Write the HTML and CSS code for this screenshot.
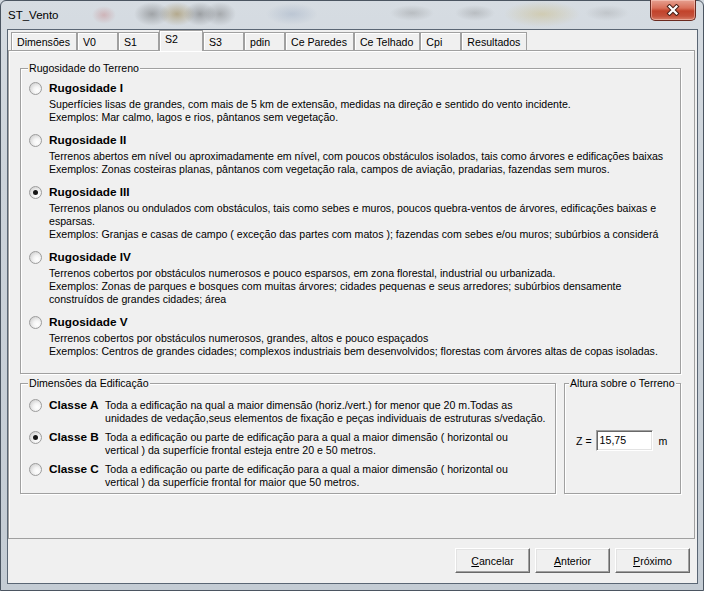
FILE: index.html
```
<!DOCTYPE html>
<html lang="pt">
<head>
<meta charset="utf-8">
<title>ST_Vento</title>
<link rel="stylesheet" href="styles.css">
</head>
<body>
<div class="window">
  <div class="titlebar">
    <span class="title">ST_Vento</span>
    <button class="close" aria-label="Fechar">
      <svg width="14" height="12" viewBox="0 0 14 12">
        <path d="M3.5 2.5 L10.5 9.5 M10.5 2.5 L3.5 9.5" stroke="#4a2018" stroke-width="4.2" stroke-linecap="square" fill="none"/>
        <path d="M3.5 2.5 L10.5 9.5 M10.5 2.5 L3.5 9.5" stroke="#ffffff" stroke-width="2.2" stroke-linecap="square" fill="none"/>
      </svg>
    </button>
  </div>
  <div class="client">
    <div class="tabs">
      <div class="tab">Dimensões</div>
      <div class="tab">V0</div>
      <div class="tab">S1</div>
      <div class="tab sel">S2</div>
      <div class="tab">S3</div>
      <div class="tab">pdin</div>
      <div class="tab">Ce Paredes</div>
      <div class="tab">Ce Telhado</div>
      <div class="tab">Cpi</div>
      <div class="tab">Resultados</div>
    </div>
    <div class="panel">
      <div class="group rug">
        <div class="legend">Rugosidade do Terreno</div>
        <div class="opts">
          <div class="opt">
            <div class="opt-head"><span class="radio"></span><b>Rugosidade I</b></div>
            <div class="opt-desc">Superfícies lisas de grandes, com mais de 5 km de extensão, medidas na direção e sentido do vento incidente.<br>Exemplos: Mar calmo, lagos e rios, pântanos sem vegetação.</div>
          </div>
          <div class="opt">
            <div class="opt-head"><span class="radio"></span><b>Rugosidade II</b></div>
            <div class="opt-desc">Terrenos abertos em nível ou aproximadamente em nível, com poucos obstáculos isolados, tais como árvores e edificações baixas<br>Exemplos: Zonas costeiras planas, pântanos com vegetação rala, campos de aviação, pradarias, fazendas sem muros.</div>
          </div>
          <div class="opt">
            <div class="opt-head"><span class="radio on"></span><b>Rugosidade III</b></div>
            <div class="opt-desc">Terrenos planos ou ondulados com obstáculos, tais como sebes e muros, poucos quebra-ventos de árvores, edificações baixas e<br>esparsas.<br>Exemplos: Granjas e casas de campo ( exceção das partes com matos ); fazendas com sebes e/ou muros; subúrbios a considerá</div>
          </div>
          <div class="opt">
            <div class="opt-head"><span class="radio"></span><b>Rugosidade IV</b></div>
            <div class="opt-desc">Terrenos cobertos por obstáculos numerosos e pouco esparsos, em zona florestal, industrial ou urbanizada.<br>Exemplos: Zonas de parques e bosques com muitas árvores; cidades pequenas e seus arredores; subúrbios densamente<br>construídos de grandes cidades; área</div>
          </div>
          <div class="opt">
            <div class="opt-head"><span class="radio"></span><b>Rugosidade V</b></div>
            <div class="opt-desc">Terrenos cobertos por obstáculos numerosos, grandes, altos e pouco espaçados<br>Exemplos: Centros de grandes cidades; complexos industriais bem desenvolvidos; florestas com árvores altas de copas isoladas.</div>
          </div>
        </div>
      </div>
      <div class="row2">
        <div class="group dim">
          <div class="legend">Dimensões da Edificação</div>
          <div class="classes">
            <div class="classe"><span class="radio"></span><b>Classe A</b><div class="ctxt">Toda a edificação na qual a maior dimensão (horiz./vert.) for menor que 20 m.Todas as<br>unidades de vedação,seus elementos de fixação e peças individuais de estruturas s/vedação.</div></div>
            <div class="classe"><span class="radio on"></span><b>Classe B</b><div class="ctxt">Toda a edificação ou parte de edificação para a qual a maior dimensão ( horizontal ou<br>vertical ) da superfície frontal esteja entre 20 e 50 metros.</div></div>
            <div class="classe"><span class="radio"></span><b>Classe C</b><div class="ctxt">Toda a edificação ou parte de edificação para a qual a maior dimensão ( horizontal ou<br>vertical ) da superfície frontal for maior que 50 metros.</div></div>
          </div>
        </div>
        <div class="group alt">
          <div class="legend alt-legend">Altura sobre o Terreno</div>
          <div class="alt-row">
            <span class="zlabel">Z =</span>
            <div class="input">15,75</div>
            <span class="unit">m</span>
          </div>
        </div>
      </div>
    </div>
    <div class="footer">
      <button class="btn"><u>C</u>ancelar</button>
      <button class="btn"><u>A</u>nterior</button>
      <button class="btn"><u>P</u>róximo</button>
    </div>
  </div>
</div>
</body>
</html>
```
FILE: styles.css
```
html, body {
  margin: 0;
  padding: 0;
}
body {
  width: 704px;
  height: 591px;
  overflow: hidden;
  font-family: "Liberation Sans", Arial, sans-serif;
  font-size: 10.6px;
  color: #000;
  background: #d0d7de;
}
.window {
  box-sizing: border-box;
  width: 704px;
  height: 591px;
  border: 1px solid #4b5561;
  border-radius: 6px 6px 0 0;
  background: linear-gradient(180deg, #d6dce2 0%, #ccd3da 30%, #c4ccd4 100%);
  padding: 0 5px 6px 6px;
  display: flex;
  flex-direction: column;
}
.titlebar {
  height: 28px;
  display: flex;
  align-items: flex-start;
  background:
    radial-gradient(ellipse 12px 9px at 97px 14px, rgba(190, 90, 90, 0.3), transparent),
    radial-gradient(ellipse 18px 12px at 145px 13px, rgba(80, 80, 80, 0.4), transparent),
    radial-gradient(ellipse 18px 12px at 170px 13px, rgba(140, 110, 40, 0.45), transparent),
    radial-gradient(ellipse 16px 12px at 193px 13px, rgba(70, 70, 70, 0.4), transparent),
    radial-gradient(ellipse 16px 12px at 213px 13px, rgba(80, 80, 80, 0.35), transparent),
    radial-gradient(ellipse 26px 11px at 285px 13px, rgba(130, 150, 180, 0.3), transparent),
    radial-gradient(ellipse 22px 8px at 405px 12px, rgba(100, 100, 100, 0.25), transparent),
    radial-gradient(ellipse 20px 8px at 468px 12px, rgba(100, 100, 100, 0.25), transparent),
    radial-gradient(ellipse 38px 13px at 535px 13px, rgba(200, 180, 110, 0.4), transparent),
    radial-gradient(ellipse 22px 8px at 600px 12px, rgba(110, 110, 110, 0.2), transparent);
}
.title {
  padding-left: 1px;
  line-height: 28px;
  font-size: 11.5px;
  color: #000;
}
.close {
  margin: -1px 2px 0 auto;
  width: 46px;
  height: 21px;
  padding: 0;
  border: 1px solid #6a2a20;
  border-top: none;
  border-radius: 0 0 5px 5px;
  background: linear-gradient(180deg, #e6a090 0%, #d9705a 40%, #c2432b 55%, #c4503a 80%, #d8806a 100%);
  box-shadow: inset 0 0 0 1px rgba(255, 220, 210, 0.45);
  display: flex;
  align-items: center;
  justify-content: center;
}
.close svg {
  display: block;
}
.client {
  flex: 1;
  border: 1px solid #5a6674;
  background: #f0f0f0;
  display: flex;
  flex-direction: column;
}
.tabs {
  height: 20px;
  display: flex;
  align-items: flex-end;
  padding-left: 3px;
}
.tab {
  box-sizing: border-box;
  height: 18px;
  min-width: 41px;
  padding: 2px 6px 0 5px;
  border: 1px solid #a0a0a0;
  border-bottom: none;
  box-shadow: inset 1px 1px #ffffff;
  line-height: 15px;
  background: #f0f0f0;
  white-space: nowrap;
}
.tab.sel {
  height: 21px;
  min-width: 44px;
  margin-bottom: -1px;
  padding-top: 1px;
  position: relative;
  z-index: 1;
}
.panel {
  box-sizing: border-box;
  width: 687px;
  height: 489px;
  border: 1px solid #a0a0a0;
  box-shadow: inset 1px 1px #ffffff;
  padding: 17px 0 0 11px;
}
.group {
  box-sizing: border-box;
  border: 1px solid #a0a0a0;
  box-shadow: inset 1px 1px #ffffff, 1px 1px #ffffff;
}
.rug {
  width: 661px;
  height: 306px;
}
.legend {
  display: table;
  margin: -7px 0 0 7px;
  padding: 0 1px;
  background: #f0f0f0;
  line-height: 13px;
  white-space: nowrap;
}
.alt-legend {
  margin-left: 4px;
}
.opts {
  margin-top: 5px;
  display: flex;
  flex-direction: column;
  gap: 8px;
}
.opt-head {
  display: flex;
  align-items: center;
  height: 16px;
}
.opt-head b {
  font-size: 11.8px;
  line-height: 16px;
}
.radio {
  box-sizing: border-box;
  flex: none;
  width: 13px;
  height: 13px;
  margin: 0 7px 0 8px;
  border-radius: 50%;
  border: 1px solid #9c9c9c;
  background: radial-gradient(circle at 65% 65%, #ffffff 0%, #f4f4f4 35%, #d6d6d6 75%, #bcbcbc 100%);
  display: flex;
  align-items: center;
  justify-content: center;
}
.radio.on::after {
  content: "";
  width: 5px;
  height: 5px;
  border-radius: 50%;
  background: #161616;
}
.opt-desc {
  margin: 2px 0 0 28px;
  line-height: 13px;
  white-space: nowrap;
}
.row2 {
  display: flex;
  gap: 8px;
  margin-top: 9px;
}
.dim {
  width: 536px;
  height: 111px;
}
.alt {
  width: 117px;
  height: 111px;
}
.classes {
  margin-top: 9px;
  display: flex;
  flex-direction: column;
  gap: 6px;
}
.classe {
  display: flex;
  align-items: flex-start;
}
.classe b {
  flex: none;
  width: 56px;
  font-size: 11.8px;
  line-height: 13px;
}
.ctxt {
  line-height: 13px;
  white-space: nowrap;
}
.alt-row {
  display: flex;
  align-items: center;
  height: 21px;
  margin: 40px 0 0 11px;
}
.input {
  box-sizing: border-box;
  width: 57px;
  height: 21px;
  margin-left: 4px;
  padding-left: 3px;
  background: #ffffff;
  border: 1px solid;
  border-color: #a0a0a0 #ffffff #ffffff #a0a0a0;
  box-shadow: inset 1px 1px #696969, inset -1px -1px #e3e3e3;
  line-height: 18px;
}
.unit {
  margin-left: 6px;
}
.footer {
  box-sizing: border-box;
  height: 44px;
  display: flex;
  justify-content: flex-end;
  gap: 5px;
  padding: 9px 7px 0 0;
}
.btn {
  box-sizing: border-box;
  width: 75px;
  height: 25px;
  padding: 0;
  border: 1px solid;
  border-color: #ffffff #696969 #696969 #ffffff;
  box-shadow: inset -1px -1px #a0a0a0, inset 1px 1px #e3e3e3;
  background: #f0f0f0;
  font-family: "Liberation Sans", Arial, sans-serif;
  font-size: 10.6px;
  color: #000;
  display: flex;
  align-items: center;
  justify-content: center;
}
```
